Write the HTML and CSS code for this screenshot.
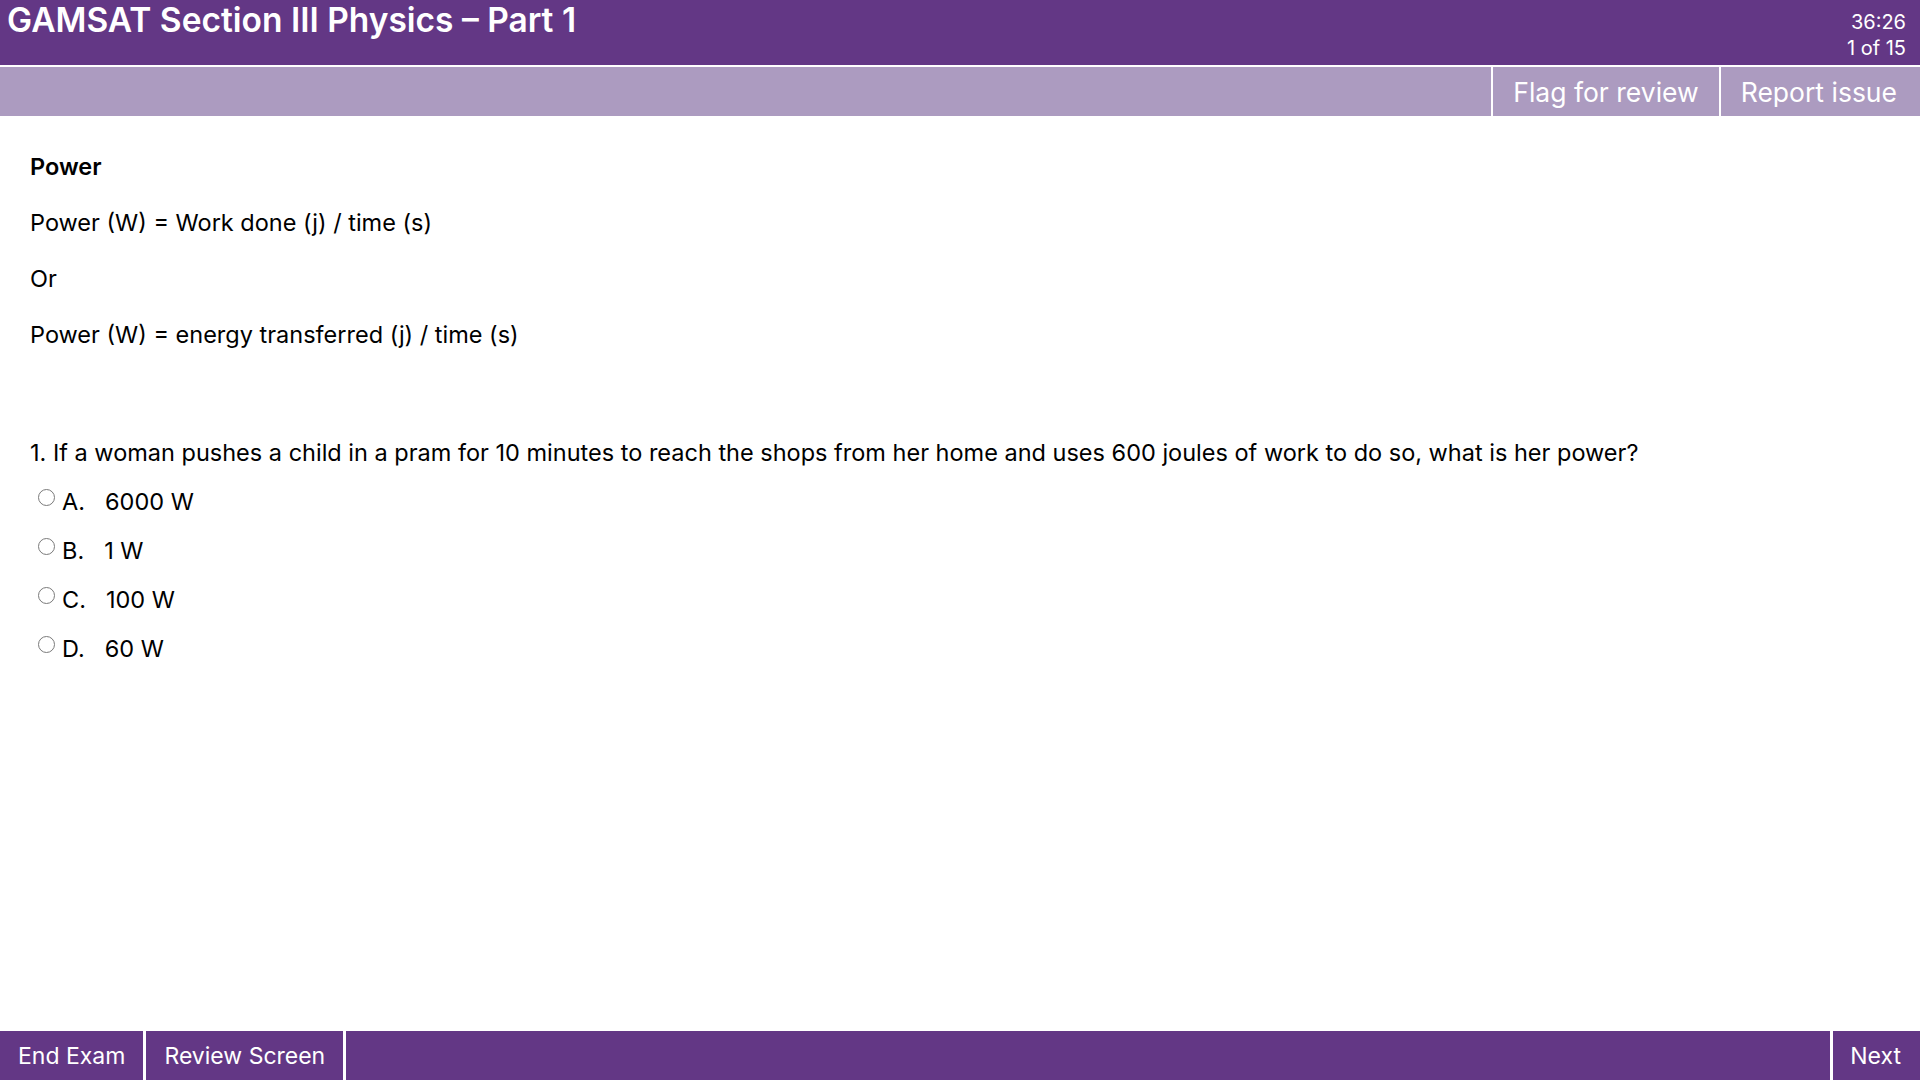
FILE: index.html
```html
<!DOCTYPE html>
<html>
<head>
    <title>GAMSAT Section III Physics – Part 1</title>
    <link rel="stylesheet" href="styles.css">
</head>
<body>
    <header class="exam-header">
        <h1 class="exam-title">GAMSAT Section III Physics – Part 1</h1>
        <div class="exam-status">
            <div>36:26</div>
            <div>1 of 15</div>
        </div>
    </header>

    <div class="toolbar">
        <button class="tool-btn">Flag for review</button>
        <button class="tool-btn">Report issue</button>
    </div>

    <main class="content">
        <div class="passage">
            <p class="passage-heading">Power</p>
            <p>Power (W) = Work done (j) / time (s)</p>
            <p>Or</p>
            <p>Power (W) = energy transferred (j) / time (s)</p>
        </div>

        <div class="question">
            <p class="question-text">1. If a woman pushes a child in a pram for 10 minutes to reach the shops from her home and uses 600 joules of work to do so, what is her power?</p>
            <div class="options">
                <label class="option"><input type="radio" name="q1"><span class="option-letter">A.</span>6000 W</label>
                <label class="option"><input type="radio" name="q1"><span class="option-letter">B.</span>1 W</label>
                <label class="option"><input type="radio" name="q1"><span class="option-letter">C.</span>100 W</label>
                <label class="option"><input type="radio" name="q1"><span class="option-letter">D.</span>60 W</label>
            </div>
        </div>
    </main>

    <footer class="exam-footer">
        <button class="nav-btn">End Exam</button>
        <button class="nav-btn">Review Screen</button>
        <div class="spacer"></div>
        <button class="nav-btn next-btn">Next</button>
    </footer>
</body>
</html>
```

FILE: styles.css
```css
body {
    margin: 0;
    padding: 0;
    font-family: Inter, "Open Sans", sans-serif;
    color: #000;
    background-color: #fff;
    display: flex;
    flex-direction: column;
    height: 100vh;
}

button {
    font-family: inherit;
    cursor: pointer;
}

.exam-header {
    background-color: #633785;
    color: #fff;
    height: 65px;
    border-bottom: 2px solid #fff;
    display: flex;
    justify-content: space-between;
    align-items: flex-start;
}

.exam-title {
    margin: 0;
    padding-left: 7px;
    font-size: 33.5px;
    font-weight: 600;
    line-height: 40px;
}

.exam-status {
    padding: 9px 14px 0 0;
    font-size: 20px;
    line-height: 26px;
    text-align: right;
}

.toolbar {
    background-color: #ac9bc0;
    height: 49px;
    display: flex;
    justify-content: flex-end;
}

.tool-btn {
    background: none;
    border: none;
    border-left: 2px solid #fff;
    color: #fff;
    font-size: 26.5px;
    padding: 0 20px 0 20px;
}

.tool-btn:last-child {
    padding-right: 23px;
}

.content {
    flex: 1;
    padding: 35px 30px 0 30px;
    font-size: 23.5px;
    line-height: 32px;
}

.content p {
    margin: 0 0 24px 0;
}

.passage-heading {
    font-weight: 600;
}

.question {
    margin-top: 86px;
}

.content .question-text {
    margin-bottom: 8px;
}

.option {
    display: block;
    line-height: 49px;
    cursor: pointer;
}

.option input {
    appearance: none;
    -webkit-appearance: none;
    width: 17px;
    height: 17px;
    margin: 0 7px 0 8px;
    border: 1px solid #7a7a7a;
    border-radius: 50%;
    background-color: #fff;
    vertical-align: 4px;
    cursor: pointer;
}

.option input:checked {
    background: radial-gradient(circle, #633785 40%, #fff 45%);
}

.option-letter {
    margin-right: 20px;
}

.exam-footer {
    background-color: #633785;
    height: 49px;
    display: flex;
}

.nav-btn {
    background: none;
    border: none;
    color: #fff;
    font-size: 23px;
    padding: 0 18px;
    border-right: 3px solid #fff;
}

.spacer {
    flex: 1;
}

.next-btn {
    border-right: none;
    border-left: 3px solid #fff;
    padding: 0 19px 0 17px;
}
```
